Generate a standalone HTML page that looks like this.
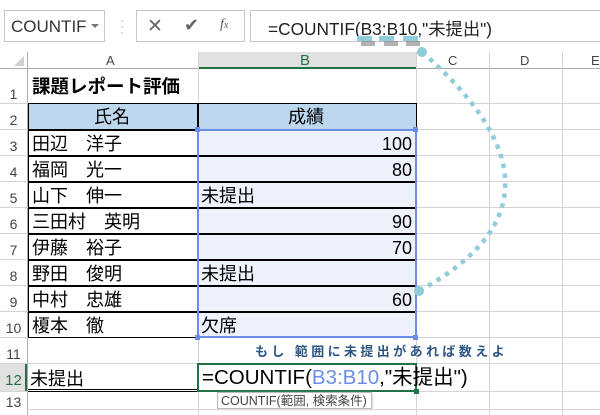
<!DOCTYPE html><html><head><meta charset="utf-8"><style>
*{margin:0;padding:0;box-sizing:border-box}
body{width:600px;height:415px;background:#fff;position:relative;overflow:hidden;font-family:"Liberation Sans","Noto Sans CJK JP",sans-serif;color:#000}
.a{position:absolute}
.box{position:absolute;border:1px solid #c6c6c6;background:#fff}
.hl{position:absolute;height:1px;background:#d4d4d4}
.vl{position:absolute;width:1px;background:#d4d4d4}
.rh{position:absolute;left:0;width:27px;text-align:center;font-size:14px;color:#444;background:#fff}
.t{position:absolute;font-size:18px;white-space:nowrap;line-height:22px}
</style></head><body>
<div class="a" style="left:0;top:0;width:600px;height:50px;background:#fff"></div>
<div class="box" style="left:4px;top:10px;width:101px;height:32px"></div>
<div class="a" style="left:11px;top:17px;font-size:17px;color:#333">COUNTIF</div>
<div class="a" style="left:91px;top:24px;border-left:4px solid transparent;border-right:4px solid transparent;border-top:4px solid #777"></div>
<div class="a" style="left:120px;top:17px;font-size:12px;color:#aaa;line-height:6px">·<br>·<br>·</div>
<div class="box" style="left:136px;top:10px;width:109px;height:32px"></div>
<div class="a" style="left:147px;top:15px;font-size:19px;color:#666">✕</div>
<div class="a" style="left:184px;top:15px;font-size:18px;color:#666">✔</div>
<div class="a" style="left:220px;top:17px;font-size:14px;color:#555;font-style:italic;font-family:'Liberation Serif',serif">f<span style="font-size:10px">x</span></div>
<div class="box" style="left:250px;top:10px;width:360px;height:32px"></div>
<div class="a" style="left:268px;top:15px;font-size:17.3px;color:#222">=COUNTIF(B3:B10,"未提出")</div>
<div class="a" style="left:0;top:52px;width:600px;height:17px;background:#fff;border-bottom:1px solid #ababab"></div>
<div class="a" style="left:198px;top:52px;width:218px;height:17px;background:#e1e1e1;border-bottom:2px solid #217346"></div>
<div class="a" style="left:14px;top:56px;border-left:10px solid transparent;border-bottom:10px solid #d0d0d0"></div>
<div class="a" style="left:106px;top:53px;font-size:13px;color:#444">A</div>
<div class="a" style="left:300px;top:52px;font-size:15px;color:#217346">B</div>
<div class="a" style="left:448px;top:53px;font-size:13px;color:#444">C</div>
<div class="a" style="left:520px;top:53px;font-size:13px;color:#444">D</div>
<div class="a" style="left:591px;top:53px;font-size:13px;color:#444">E</div>
<div class="vl" style="left:27px;top:52px;height:363px;background:#ababab"></div>
<div class="vl" style="left:198px;top:52px;height:363px"></div>
<div class="vl" style="left:416px;top:52px;height:363px"></div>
<div class="vl" style="left:489px;top:52px;height:363px"></div>
<div class="vl" style="left:562px;top:52px;height:363px"></div>
<div class="hl" style="left:0;top:103px;width:600px"></div>
<div class="hl" style="left:0;top:129px;width:600px"></div>
<div class="hl" style="left:0;top:155px;width:600px"></div>
<div class="hl" style="left:0;top:181px;width:600px"></div>
<div class="hl" style="left:0;top:207px;width:600px"></div>
<div class="hl" style="left:0;top:233px;width:600px"></div>
<div class="hl" style="left:0;top:259px;width:600px"></div>
<div class="hl" style="left:0;top:285px;width:600px"></div>
<div class="hl" style="left:0;top:311px;width:600px"></div>
<div class="hl" style="left:0;top:337px;width:600px"></div>
<div class="hl" style="left:0;top:363px;width:600px"></div>
<div class="hl" style="left:0;top:391px;width:600px"></div>
<div class="hl" style="left:0;top:409px;width:600px"></div>
<div class="rh" style="top:86px">1</div>
<div class="rh" style="top:112px">2</div>
<div class="rh" style="top:138px">3</div>
<div class="rh" style="top:164px">4</div>
<div class="rh" style="top:190px">5</div>
<div class="rh" style="top:216px">6</div>
<div class="rh" style="top:242px">7</div>
<div class="rh" style="top:268px">8</div>
<div class="rh" style="top:294px">9</div>
<div class="rh" style="top:320px">10</div>
<div class="rh" style="top:346px">11</div>
<div class="a" style="left:0;top:364px;width:27px;height:27px;background:#e1e1e1;border-right:2px solid #217346"></div>
<div class="rh" style="top:372px;background:transparent;color:#217346;font-size:15px">12</div>
<div class="rh" style="top:394px">13</div>
<div class="a" style="left:28px;top:104px;width:388px;height:25px;background:#bdd7ee"></div>
<div class="a" style="left:199px;top:130px;width:217px;height:207px;background:#eef2fc"></div>
<div class="a" style="left:28px;top:103px;width:389px;height:235px;border:1.5px solid #000"></div>
<div class="a" style="left:197px;top:103px;width:1.5px;height:235px;background:#000"></div>
<div class="a" style="left:28px;top:129px;width:389px;height:1.5px;background:#000"></div>
<div class="a" style="left:28px;top:155px;width:389px;height:1.5px;background:#000"></div>
<div class="a" style="left:28px;top:181px;width:389px;height:1.5px;background:#000"></div>
<div class="a" style="left:28px;top:207px;width:389px;height:1.5px;background:#000"></div>
<div class="a" style="left:28px;top:233px;width:389px;height:1.5px;background:#000"></div>
<div class="a" style="left:28px;top:259px;width:389px;height:1.5px;background:#000"></div>
<div class="a" style="left:28px;top:285px;width:389px;height:1.5px;background:#000"></div>
<div class="a" style="left:28px;top:311px;width:389px;height:1.5px;background:#000"></div>
<div class="a" style="left:28px;top:389px;width:170px;height:3px;border-top:1px solid #000;border-bottom:1px solid #000"></div>
<div class="a" style="left:197px;top:129px;width:220px;height:209px;border:2px solid #6a8ee8"></div>
<div class="a" style="left:195px;top:127px;width:5px;height:5px;background:#6a8ee8"></div>
<div class="a" style="left:413px;top:127px;width:5px;height:5px;background:#6a8ee8"></div>
<div class="a" style="left:195px;top:335px;width:5px;height:5px;background:#6a8ee8"></div>
<div class="a" style="left:413px;top:335px;width:5px;height:5px;background:#6a8ee8"></div>
<div class="t" style="left:32px;top:76px;font-weight:bold;font-size:18.5px">課題レポート評価</div>
<div class="t" style="left:94px;top:106px">氏名</div>
<div class="t" style="left:288px;top:106px">成績</div>
<div class="t" style="left:32px;top:133px">田辺　洋子</div>
<div class="t" style="left:32px;top:159px">福岡　光一</div>
<div class="t" style="left:32px;top:185px">山下　伸一</div>
<div class="t" style="left:32px;top:211px">三田村　英明</div>
<div class="t" style="left:32px;top:237px">伊藤　裕子</div>
<div class="t" style="left:32px;top:263px">野田　俊明</div>
<div class="t" style="left:32px;top:289px">中村　忠雄</div>
<div class="t" style="left:32px;top:315px">榎本　徹</div>
<div class="t" style="right:188px;top:133px">100</div>
<div class="t" style="right:188px;top:159px">80</div>
<div class="t" style="left:201px;top:185px">未提出</div>
<div class="t" style="right:188px;top:211px">90</div>
<div class="t" style="right:188px;top:237px">70</div>
<div class="t" style="left:201px;top:263px">未提出</div>
<div class="t" style="right:188px;top:289px">60</div>
<div class="t" style="left:201px;top:315px">欠席</div>
<div class="a" style="left:255px;top:341px;font-size:13px;font-weight:bold;color:#2e5785;letter-spacing:3.4px;white-space:nowrap">もし 範囲に未提出があれば数えよ</div>
<div class="t" style="left:30px;top:368px">未提出</div>
<div class="a" style="left:197px;top:363px;width:220px;height:29px;border:2px solid #217346"></div>
<div class="a" style="left:414px;top:389px;width:5px;height:5px;background:#217346"></div>
<div class="a" style="left:202px;top:365px;font-size:20.5px;white-space:nowrap;line-height:26px">=COUNTIF(<span style="color:#6b8fe6">B3:B10</span>,"未提出")</div>
<div class="a" style="left:217px;top:392px;width:155px;height:17px;border:1px solid #bbb;background:#fff;font-size:12.5px;line-height:14px;color:#444;padding:1px 3px;white-space:nowrap;box-shadow:1px 1px 2px #ddd">COUNTIF(範囲, 検索条件)</div>
<svg class="a" style="left:0;top:0" width="600" height="415">
<g fill="#7f7f7f" opacity="0.6"><rect x="361" y="41" width="14" height="5"/><rect x="384" y="41" width="14" height="5"/><rect x="406" y="41" width="14" height="5"/></g>
<g fill="#90ccd9"><rect x="357" y="36" width="15" height="5"/><rect x="379" y="36" width="15" height="5"/><rect x="403" y="36" width="15" height="5"/></g>
<path d="M422,52 Q590,198 419,291" fill="none" stroke="#90ccd9" stroke-width="4.5" stroke-dasharray="4.5 5.5"/>
<circle cx="422" cy="52" r="5" fill="#90ccd9"/>
<circle cx="419" cy="291" r="5" fill="#90ccd9"/>
</svg>
</body></html>
